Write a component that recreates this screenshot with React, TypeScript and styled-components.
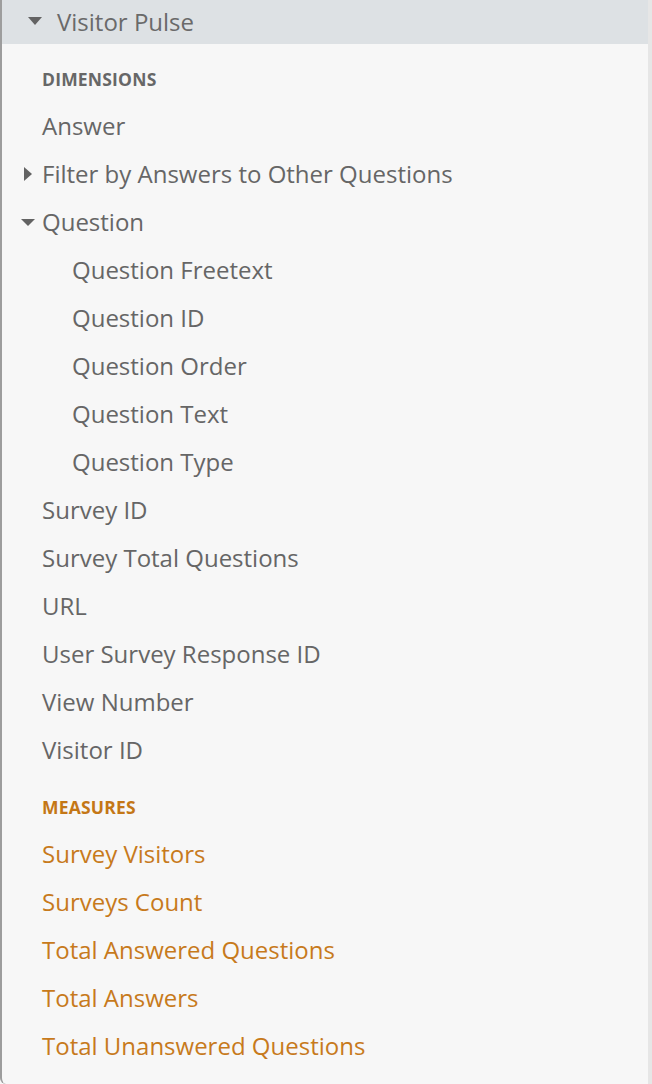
import styled, { createGlobalStyle } from "styled-components";

const GlobalStyle = createGlobalStyle`
  html, body {
    margin: 0;
    padding: 0;
    background: #f7f7f7;
  }
  body {
    font-family: "Open Sans", "Noto Sans", sans-serif;
  }
`;

type Field = { label: string; sub?: boolean; toggle?: "open" | "closed" };

const dimensions: Field[] = [
  { label: "Answer" },
  { label: "Filter by Answers to Other Questions", toggle: "closed" },
  { label: "Question", toggle: "open" },
  { label: "Question Freetext", sub: true },
  { label: "Question ID", sub: true },
  { label: "Question Order", sub: true },
  { label: "Question Text", sub: true },
  { label: "Question Type", sub: true },
  { label: "Survey ID" },
  { label: "Survey Total Questions" },
  { label: "URL" },
  { label: "User Survey Response ID" },
  { label: "View Number" },
  { label: "Visitor ID" },
];

const measures: Field[] = [
  { label: "Survey Visitors" },
  { label: "Surveys Count" },
  { label: "Total Answered Questions" },
  { label: "Total Answers" },
  { label: "Total Unanswered Questions" },
];

const App = () => {
  return (
    <>
      <GlobalStyle />
      <Panel>
        <Header>
          <Caret $dir="down" $size={15} />
          <span>Visitor Pulse</span>
        </Header>

        <SectionLabel>Dimensions</SectionLabel>
        {dimensions.map((f) => (
          <Row key={f.label} $sub={f.sub}>
            {f.toggle && (
              <Toggle>
                <Caret $dir={f.toggle === "open" ? "down" : "right"} $size={14} />
              </Toggle>
            )}
            {f.label}
          </Row>
        ))}

        <SectionLabel $measure $top={23}>
          Measures
        </SectionLabel>
        {measures.map((f) => (
          <Row key={f.label} $measure>
            {f.label}
          </Row>
        ))}
      </Panel>
    </>
  );
};

export default App;

const Panel = styled.div`
  box-sizing: border-box;
  width: 652px;
  min-height: 1084px;
  background: #f7f7f7;
  border-left: 2px solid #9d9d9d;
  border-right: 4px solid #e6e6e6;
  border-bottom-left-radius: 6px;
  padding-bottom: 14px;
  color: #666666;
`;

const Header = styled.div`
  box-sizing: border-box;
  height: 44px;
  display: flex;
  align-items: center;
  gap: 15px;
  padding: 0 0 2px 26px;
  background: #dde1e4;
  font-size: 24px;
  color: #6a6a6a;
`;

const Caret = styled.span<{ $dir: "down" | "right"; $size: number }>`
  display: inline-block;
  flex: none;
  width: 0;
  height: 0;
  ${({ $dir, $size }) =>
    $dir === "down"
      ? `
    border-left: ${$size / 2}px solid transparent;
    border-right: ${$size / 2}px solid transparent;
    border-top: ${Math.round($size / 2)}px solid #636363;
  `
      : `
    border-top: ${$size / 2}px solid transparent;
    border-bottom: ${$size / 2}px solid transparent;
    border-left: ${Math.round($size / 2) + 1}px solid #636363;
  `}
`;

const SectionLabel = styled.div<{ $measure?: boolean; $top?: number }>`
  padding: ${({ $top }) => $top ?? 25}px 0 13px 40px;
  line-height: 20px;
  font-size: 17.5px;
  font-weight: 700;
  text-transform: uppercase;
  letter-spacing: 0.2px;
  color: ${({ $measure }) => ($measure ? "#c47716" : "#676767")};
`;

const Row = styled.div<{ $sub?: boolean; $measure?: boolean }>`
  box-sizing: border-box;
  position: relative;
  height: 48px;
  display: flex;
  align-items: center;
  padding-left: ${({ $sub }) => ($sub ? 70 : 40)}px;
  padding-bottom: 2px;
  font-size: 24px;
  color: ${({ $measure }) => ($measure ? "#c77a1c" : "#666666")};
`;

const Toggle = styled.span`
  position: absolute;
  left: 18px;
  top: 0;
  bottom: 0;
  width: 16px;
  display: flex;
  align-items: center;
  justify-content: center;
`;
